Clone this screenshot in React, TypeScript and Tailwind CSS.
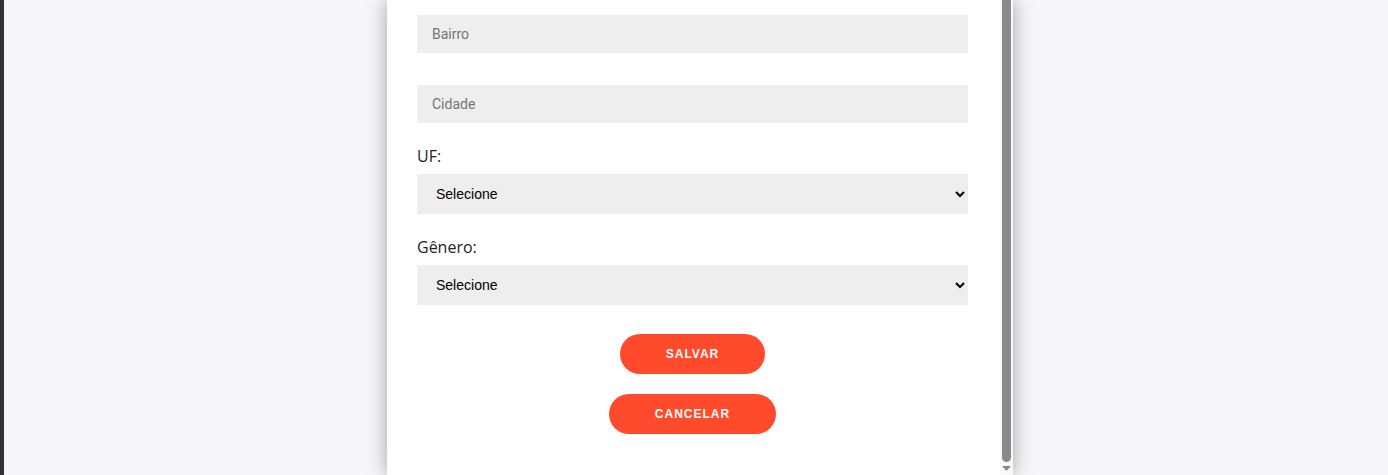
import React from 'react'

const labelFont = { fontFamily: '"Open Sans", "Noto Sans", sans-serif' }

const TextField = ({ placeholder }: { placeholder: string }) => (
  <input
    type="text"
    placeholder={placeholder}
    className="w-[551px] h-[38px] bg-[#eeeeee] px-[15px] text-[14px] text-[#333] placeholder:text-[#757575] outline-none font-['Roboto',sans-serif]"
  />
)

const SelectField = ({ label }: { label: string }) => (
  <div className="flex flex-col">
    <label className="text-[16px] leading-[20px] text-[#222] mb-2" style={labelFont}>
      {label}
    </label>
    <select className="w-[551px] h-[40px] bg-[#eeeeee] pl-[15px] pr-2 text-[14px] text-black font-['Liberation_Sans',Arial,sans-serif] outline-none">
      <option>Selecione</option>
    </select>
  </div>
)

const Button = ({ text, width }: { text: string; width: string }) => (
  <button
    className={`${width} h-[40px] rounded-full bg-[#ff4a2b] text-white text-[12px] font-bold tracking-[1px] font-['Liberation_Sans',Arial,sans-serif]`}
  >
    {text}
  </button>
)

export default function App() {
  return (
    <div className="w-[1388px] h-[475px] bg-[#f6f6f8] flex overflow-hidden">
      <div className="w-[4px] h-full bg-[#333333]" />
      <div className="w-[383px]" />
      <div className="w-[626px] h-full bg-white flex shadow-[0_0_18px_rgba(0,0,0,0.35)]">
        <div className="w-[613px] pl-[30px] pt-[15px] flex flex-col">
          <TextField placeholder="Bairro" />
          <div className="h-[32px]" />
          <TextField placeholder="Cidade" />
          <div className="h-[23px]" />
          <SelectField label="UF:" />
          <div className="h-[23px]" />
          <SelectField label="Gênero:" />
          <div className="w-[551px] flex flex-col items-center pt-[29px] gap-[20px]">
            <Button text="SALVAR" width="w-[145px]" />
            <Button text="CANCELAR" width="w-[167px]" />
          </div>
        </div>
        <div className="w-[13px] h-full bg-[#f9f9f9] flex flex-col items-center">
          <div className="w-[9px] h-[462px] bg-[#8a8a8a] rounded-b-[5px]" />
          <svg width="9" height="7" viewBox="0 0 9 7" className="mt-[3px]">
            <polygon points="0,1 9,1 4.5,6" fill="#8a8a8a" />
          </svg>
        </div>
      </div>
    </div>
  )
}
